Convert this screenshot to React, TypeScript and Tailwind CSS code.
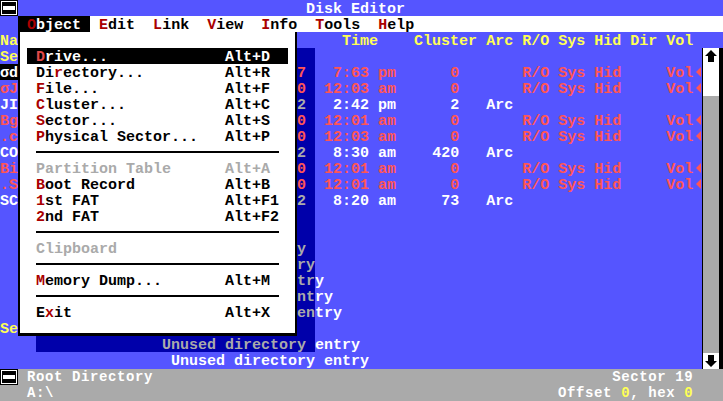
import React from "react";

type Seg = { c: number; t?: string; cls?: string; node?: React.ReactNode; w?: number };

function Line({ segs, cols, className = "" }: { segs: Seg[]; cols: number; className?: string }) {
  const sorted = [...segs].sort((a, b) => a.c - b.c);
  const out: React.ReactNode[] = [];
  let pos = 0;
  sorted.forEach((s, i) => {
    if (s.c > pos) out.push(<span key={"g" + i}>{" ".repeat(s.c - pos)}</span>);
    if (s.node) {
      out.push(
        <span key={"n" + i} className={"flex " + (s.cls ?? "")}>
          {s.node}
        </span>
      );
      pos = s.c + (s.w ?? 1);
    } else {
      const t = s.t ?? "";
      out.push(
        <span key={"s" + i} className={s.cls}>
          {t}
        </span>
      );
      pos = s.c + t.length;
    }
  });
  if (pos < cols) out.push(<span key="end">{" ".repeat(cols - pos)}</span>);
  return <div className={"flex h-4 shrink-0 whitespace-pre " + className}>{out}</div>;
}

const Y = "text-[#ffff55]";
const W = "text-white";
const R = "text-[#ff5555]";
const SH = "bg-[#0000aa]";
const SHR = "bg-[#0000aa] text-[#ff5555]";
const SHW = "bg-[#0000aa] text-[#aaaaaa]";
const HOT = "text-[#aa0000]";

function SysIcon() {
  return (
    <svg width="18" height="16" viewBox="0 0 18 16" className="shrink-0">
      <rect x="0" y="0" width="18" height="16" fill="black" />
      <rect x="1.5" y="1.5" width="15" height="13" fill="none" stroke="white" strokeWidth="1" />
      <rect x="3" y="6" width="12" height="4" fill="white" />
    </svg>
  );
}

function Tri() {
  return (
    <svg width="9" height="16" viewBox="0 0 9 16">
      <polygon points="3,8 8,3 8,13" fill="#ff5555" />
    </svg>
  );
}

function Arrow({ up }: { up: boolean }) {
  return (
    <div className="flex h-4 items-center justify-center bg-white">
      <svg width="16" height="16" viewBox="0 0 16 16">
        {up ? (
          <polygon points="8,2 2,8 5,8 5,14 11,14 11,8 14,8" fill="black" />
        ) : (
          <polygon points="8,14 2,8 5,8 5,2 11,2 11,8 14,8" fill="black" />
        )}
      </svg>
    </div>
  );
}

function dataRow(
  left: string,
  leftCls: string,
  sh: string,
  time: string,
  cluster: string,
  red: boolean
): Seg[] {
  const cls = red ? R : W;
  const segs: Seg[] = [
    { c: 0, t: left, cls: leftCls },
    { c: 33, t: sh + " ", cls: red ? SHR : SHW },
    { c: 44 - time.length, t: time, cls },
    { c: 51 - cluster.length, t: cluster, cls },
  ];
  if (red) {
    segs.push({ c: 58, t: "R/O Sys Hid", cls: R });
    segs.push({ c: 74, t: "Vol", cls: R });
    segs.push({ c: 77, node: <Tri /> });
  } else {
    segs.push({ c: 54, t: "Arc", cls: W });
  }
  return segs;
}

const UDE = "Unused directory entry";

function unusedRow(start: number): Seg[] {
  const vis = UDE.slice(33 - start);
  return [
    { c: 33, t: vis.slice(0, 2).padEnd(2, " "), cls: SHW },
    { c: 35, t: vis.slice(2), cls: W },
  ];
}

const contentRows: Seg[][] = [
  [{ c: 0, t: "Se", cls: Y }, { c: 33, t: "  ", cls: SH }],
  dataRow("σd", "bg-black text-white", "7", "7:63 pm", "0", true),
  dataRow("σJ", R, "0", "12:03 am", "0", true),
  dataRow("JI", W, "2", "2:42 pm", "2", false),
  dataRow("Bg", R, "0", "12:01 am", "0", true),
  dataRow(".c", R, "0", "12:03 am", "0", true),
  dataRow("CO", W, "2", "8:30 am", "420", false),
  dataRow("Bi", R, "0", "12:01 am", "0", true),
  dataRow(".S", R, "0", "12:01 am", "0", true),
  dataRow("SC", W, "2", "8:20 am", "73", false),
  [{ c: 33, t: "  ", cls: SH }],
  [{ c: 33, t: "  ", cls: SH }],
  unusedRow(12),
  unusedRow(13),
  unusedRow(14),
  unusedRow(15),
  unusedRow(16),
  [{ c: 0, t: "Se", cls: Y }, { c: 33, t: "  ", cls: SH }],
  [
    { c: 4, t: " ".repeat(14), cls: SH },
    { c: 18, t: "Unused directory ", cls: SHW },
    { c: 35, t: "entry", cls: W },
  ],
  [{ c: 19, t: UDE, cls: W }],
];

type MenuItem =
  | { sep: true }
  | { pre?: string; hot?: string; post?: string; label?: string; sc: string; sel?: boolean; dis?: boolean; sep?: false };

const menu: MenuItem[] = [
  { hot: "D", post: "rive...", sc: "Alt+D", sel: true },
  { pre: "Di", hot: "r", post: "ectory...", sc: "Alt+R" },
  { hot: "F", post: "ile...", sc: "Alt+F" },
  { hot: "C", post: "luster...", sc: "Alt+C" },
  { hot: "S", post: "ector...", sc: "Alt+S" },
  { hot: "P", post: "hysical Sector...", sc: "Alt+P" },
  { sep: true },
  { label: "Partition Table", sc: "Alt+A", dis: true },
  { hot: "B", post: "oot Record", sc: "Alt+B" },
  { hot: "1", post: "st FAT", sc: "Alt+F1" },
  { hot: "2", post: "nd FAT", sc: "Alt+F2" },
  { sep: true },
  { label: "Clipboard", sc: "", dis: true },
  { sep: true },
  { hot: "M", post: "emory Dump...", sc: "Alt+M" },
  { sep: true },
  { pre: "E", hot: "x", post: "it", sc: "Alt+X" },
];

function Menu() {
  return (
    <div className="absolute left-[18px] top-[32px] flex h-[304px] w-[279px] flex-col border-b-[3px] border-l-2 border-r-2 border-black bg-white pl-[7px] pt-4 text-black">
      {menu.map((m, i) => {
        if (m.sep) {
          return (
            <div key={i} className="h-4 shrink-0 pl-[9px] pt-[7px]">
              <div className="h-[2px] w-[243px] bg-black" />
            </div>
          );
        }
        const it = m as Exclude<MenuItem, { sep: true }>;
        const base = it.dis ? "text-[#aaaaaa]" : it.sel ? "text-white" : "text-black";
        return (
          <div
            key={i}
            className={"flex h-4 w-[261px] shrink-0 whitespace-pre " + (it.sel ? "bg-black " : "") + base}
          >
            <span className="w-[9px]"> </span>
            <span className="flex w-[189px]">
              {it.label ? (
                <span>{it.label}</span>
              ) : (
                <>
                  {it.pre && <span>{it.pre}</span>}
                  <span className={it.sel ? "text-[#e04848]" : HOT}>{it.hot}</span>
                  <span>{it.post}</span>
                </>
              )}
            </span>
            <span>{it.sc}</span>
          </div>
        );
      })}
    </div>
  );
}

function menuBarSegs(): Seg[] {
  const items: [number, string][] = [
    [9, "Edit"],
    [15, "Link"],
    [21, "View"],
    [27, "Info"],
    [33, "Tools"],
    [40, "Help"],
  ];
  const segs: Seg[] = [
    { c: 0, t: " ", cls: "bg-black" },
    { c: 1, t: "O", cls: "bg-black text-[#aa0000]" },
    { c: 2, t: "bject ", cls: "bg-black text-white" },
  ];
  items.forEach(([c, w]) => {
    segs.push({ c, t: w[0], cls: HOT });
    segs.push({ c: c + 1, t: w.slice(1), cls: "text-black" });
  });
  return segs;
}

export default function App() {
  return (
    <div className="relative h-[401px] w-[723px] overflow-hidden bg-black font-['Liberation_Mono',monospace] text-[15px] font-bold leading-[20px]">
      {/* title bar */}
      <div className="flex h-4 bg-[#5555ff]">
        <SysIcon />
        <Line cols={78} segs={[{ c: 32, t: "Disk Editor", cls: W }]} />
      </div>
      {/* menu bar */}
      <div className="flex h-4 bg-white">
        <div className="w-[18px] shrink-0 bg-[#5555ff]" />
        <Line cols={78} segs={menuBarSegs()} />
      </div>
      {/* header */}
      <div className="h-4 bg-[#5555ff]">
        <Line
          cols={80}
          className={Y}
          segs={[
            { c: 0, t: "Na" },
            { c: 38, t: "Time" },
            { c: 46, t: "Cluster" },
            { c: 54, t: "Arc" },
            { c: 58, t: "R/O" },
            { c: 62, t: "Sys" },
            { c: 66, t: "Hid" },
            { c: 70, t: "Dir" },
            { c: 74, t: "Vol" },
          ]}
        />
      </div>
      {/* content */}
      <div className="flex h-[321px]">
        <div className="flex w-[702px] shrink-0 flex-col overflow-hidden bg-[#5555ff] text-white">
          {contentRows.map((segs, i) => (
            <Line key={i} cols={78} segs={segs} />
          ))}
        </div>
        <div className="flex w-[18px] shrink-0 flex-col border-x border-black bg-[#aaaaaa]">
          <Arrow up />
          <div className="h-8 bg-white" />
          <div className="flex-1" />
          <Arrow up={false} />
        </div>
        <div className="flex-1 bg-black" />
      </div>
      {/* status */}
      <div className="flex h-[32px] flex-col bg-[#aaaaaa] text-[14px] leading-[12px] tracking-[0.6px] text-white">
        <div className="flex h-4">
          <SysIcon />
          <Line
            cols={78}
            className="pt-[2px]"
            segs={[
              { c: 1, t: "Root Directory" },
              { c: 66, t: "Sector 19" },
            ]}
          />
        </div>
        <div className="flex h-4">
          <div className="w-[18px] shrink-0" />
          <Line
            cols={78}
            className="pt-[2px]"
            segs={[
              { c: 1, t: "A:\\" },
              { c: 60, t: "Offset " },
              { c: 67, t: "0", cls: Y },
              { c: 68, t: ", hex " },
              { c: 74, t: "0", cls: Y },
            ]}
          />
        </div>
      </div>
      <Menu />
    </div>
  );
}
